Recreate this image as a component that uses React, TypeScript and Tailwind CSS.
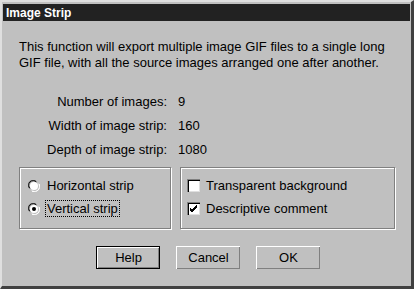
const font = { fontFamily: '"Liberation Sans", Arial, sans-serif' };

function Radio({ checked }: { checked?: boolean }) {
  return (
    <svg width="12" height="12" viewBox="0 0 12 12" className="shrink-0">
      <path d="M1 8 A5 5 0 0 1 8 1" fill="none" stroke="#808080" strokeWidth="1" />
      <path d="M2 8.5 A4 4 0 0 1 8.5 2" fill="none" stroke="#000" strokeWidth="1" />
      <circle cx="6" cy="6" r="4" fill="#fff" />
      <path d="M3.5 10.5 A5 5 0 0 0 10.5 3.5" fill="none" stroke="#dfdfdf" strokeWidth="1" />
      <path d="M4 11.3 A5.5 5.5 0 0 0 11.3 4" fill="none" stroke="#fff" strokeWidth="1" />
      {checked && <circle cx="6" cy="6" r="2" fill="#000" />}
    </svg>
  );
}

function Check({ checked }: { checked?: boolean }) {
  return (
    <div className="w-[13px] h-[13px] shrink-0 bg-white border-t border-l border-[#808080] border-r-white border-b-white shadow-[inset_1px_1px_0_#000,inset_-1px_-1px_0_#dfdfdf]">
      {checked && (
        <svg width="11" height="11" viewBox="0 0 11 11">
          <path d="M2 5 L4 7 L9 2 M2 6 L4 8 L9 3 M2 7 L4 9 L9 4" fill="none" stroke="#000" strokeWidth="1" />
        </svg>
      )}
    </div>
  );
}

function Button({ label, isDefault }: { label: string; isDefault?: boolean }) {
  return (
    <div
      className={
        "w-[64px] h-[23px] shrink-0 flex " +
        (isDefault ? "border border-black" : "")
      }
    >
      <div className="flex-1 flex items-center justify-center bg-[#c0c0c0] border-t border-l border-white border-r-black border-b-black shadow-[inset_-1px_-1px_0_#808080]">
        <span className="text-[13px] text-black">{label}</span>
      </div>
    </div>
  );
}

function Row({ label, value }: { label: string; value: string }) {
  return (
    <div className="flex h-[24px] items-center shrink-0">
      <span className="w-[165px] text-right">{label}</span>
      <span className="ml-[11px]">{value}</span>
    </div>
  );
}

export default function App() {
  return (
    <div className="w-[414px] h-[289px] overflow-hidden bg-white" style={font}>
      <div className="w-[414px] h-[289px] flex flex-col bg-[#c0c0c0] border-t-2 border-l-2 border-[#dfdfdf] border-r-[3px] border-b-[3px] border-r-[#404040] border-b-[#404040] text-[13px] text-black">
        <div className="mx-[1px] mt-[2px] h-[17px] shrink-0 bg-[#222222] flex items-center px-[3px]">
          <span className="text-white font-bold text-[12px] leading-none">Image Strip</span>
        </div>

        <div className="pl-[17px] pt-[18px] leading-[16px] shrink-0">
          <p>This function will export multiple image GIF files to a single long</p>
          <p>GIF file, with all the source images arranged one after another.</p>
        </div>

        <div className="mt-[19px] shrink-0">
          <Row label="Number of images:" value="9" />
          <Row label="Width of image strip:" value="160" />
          <Row label="Depth of image strip:" value="1080" />
        </div>

        <div className="flex gap-[9px] pl-[17px] mt-[5px] shrink-0">
          <div className="w-[152px] h-[62px] border border-[#808080] shadow-[inset_1px_1px_0_#fff,1px_1px_0_#fff] flex flex-col pt-[6px] pl-[8px]">
            <div className="flex items-center gap-[5px] h-[23px]">
              <Radio />
              <span className="px-[1px] border border-transparent leading-[15px]">Horizontal strip</span>
            </div>
            <div className="flex items-center gap-[5px] h-[23px]">
              <Radio checked />
              <span className="px-[1px] border border-dotted border-black leading-[15px]">Vertical strip</span>
            </div>
          </div>
          <div className="w-[215px] h-[62px] border border-[#808080] shadow-[inset_1px_1px_0_#fff,1px_1px_0_#fff] flex flex-col pt-[6px] pl-[6px]">
            <div className="flex items-center gap-[6px] h-[23px]">
              <Check />
              <span>Transparent background</span>
            </div>
            <div className="flex items-center gap-[6px] h-[23px]">
              <Check checked />
              <span>Descriptive comment</span>
            </div>
          </div>
        </div>

        <div className="flex pl-[94px] gap-[16px] mt-[17px] shrink-0">
          <Button label="Help" isDefault />
          <Button label="Cancel" />
          <Button label="OK" />
        </div>
      </div>
    </div>
  );
}
